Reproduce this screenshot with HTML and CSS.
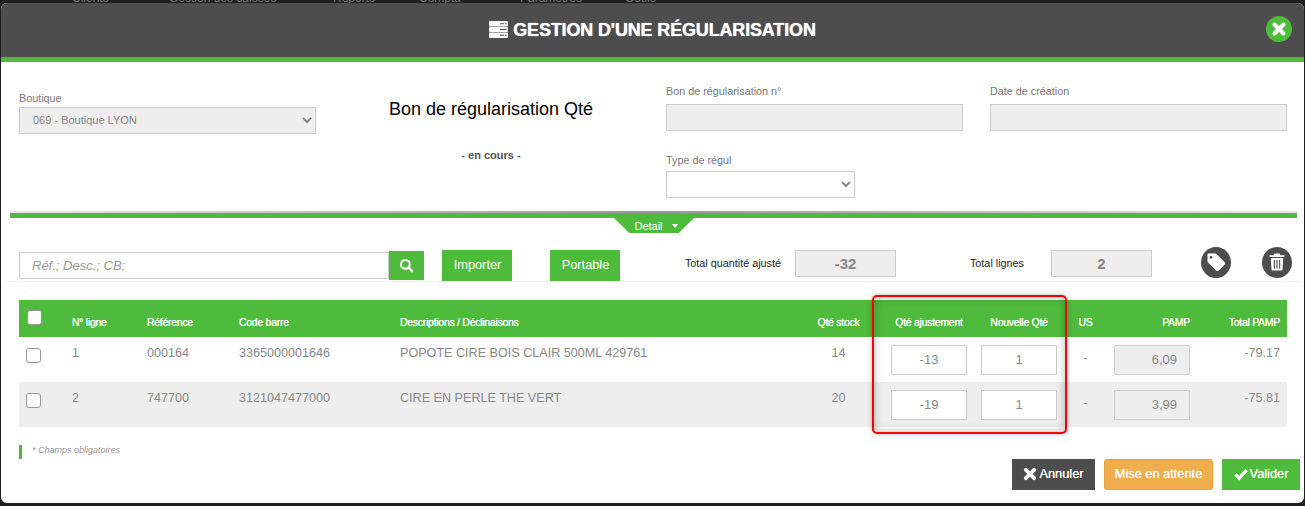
FILE: index.html
```html
<!DOCTYPE html>
<html lang="fr">
<head>
<meta charset="utf-8">
<title>Gestion d'une régularisation</title>
<link rel="stylesheet" href="styles.css">
</head>
<body>
<nav class="topnav">
  <div class="topnav-inner">
    <span>Clients</span><span>Gestion des caisses</span><span>Reports</span><span>Compta</span><span>Paramètres</span><span>Outils</span>
  </div>
</nav>
<main class="modal">
  <header class="modal-head">
    <svg class="head-icon" viewBox="0 0 19 17" aria-hidden="true">
      <path fill="#fff" fill-rule="evenodd" d="M1 0h17a1 1 0 0 1 1 1v3.500a1 1 0 0 1-1 1H1a1 1 0 0 1-1-1V1a1 1 0 0 1 1-1zM11 2.200v1h4v-1zM16 2.200v1h1.500v-1zM1 6h17a1 1 0 0 1 1 1v3a1 1 0 0 1-1 1H1a1 1 0 0 1-1-1V7a1 1 0 0 1 1-1zM11 8v1h6.500V8zM1 11.500h17a1 1 0 0 1 1 1V16a1 1 0 0 1-1 1H1a1 1 0 0 1-1-1v-3.500a1 1 0 0 1 1-1zM11 13.800v1h4v-1zM16 13.800v1h1.500v-1z"/>
    </svg>
    <h1 class="modal-title">GESTION D'UNE RÉGULARISATION</h1>
    <button class="close" type="button" aria-label="Fermer">
      <svg viewBox="0 0 26 26" aria-hidden="true"><path d="M8.500 8.500l9 9M17.500 8.500l-9 9" stroke="#fff" stroke-width="4" stroke-linecap="round"/></svg>
    </button>
  </header>

  <section class="form-top">
    <div class="col-shop">
      <label class="field-label">Boutique</label>
      <select class="field select-shop" disabled><option>069 - Boutique LYON</option></select>
    </div>
    <div class="col-title">
      <h2 class="doc-title">Bon de régularisation Qté</h2>
      <p class="doc-status">- en cours -</p>
    </div>
    <div class="col-bon">
      <label class="field-label label-tight">Bon de régularisation n°</label>
      <input class="field field-off" type="text" disabled>
      <label class="field-label label-type">Type de régul</label>
      <select class="field select-type"><option></option></select>
    </div>
    <div class="col-date">
      <label class="field-label label-tight">Date de création</label>
      <input class="field field-off" type="text" disabled>
    </div>
  </section>

  <div class="divider">
    <div class="divider-tab"><span>Detail</span><i class="caret"></i></div>
  </div>

  <section class="toolbar">
    <input class="search" type="text" placeholder="Réf.; Desc.; CB;">
    <button class="search-btn" type="button" aria-label="Rechercher">
      <svg viewBox="0 0 16 16" aria-hidden="true"><circle cx="6.800" cy="6.800" r="4.600" fill="none" stroke="#fff" stroke-width="2.200"/><path d="M10.300 10.300l3.700 3.700" stroke="#fff" stroke-width="2.600" stroke-linecap="round"/></svg>
    </button>
    <button class="btn-green btn-import" type="button">Importer</button>
    <button class="btn-green btn-portable" type="button">Portable</button>
    <span class="total-label label-qty">Total quantité ajusté</span>
    <output class="total-box">-32</output>
    <span class="total-label label-lines">Total lignes</span>
    <output class="total-box">2</output>
    <button class="round round-tag" type="button" aria-label="Étiquette">
      <svg viewBox="0 0 30 31" aria-hidden="true"><path fill="#fff" fill-rule="evenodd" d="M7.500 6.500h6.500c.7 0 1.300.3 1.800.8l7.700 7.700c.8.8.8 2 0 2.800l-5.700 5.700c-.8.800-2 .8-2.800 0l-7.700-7.700c-.5-.5-.8-1.100-.8-1.800V7.500a1 1 0 0 1 1-1zM10 8.900a1.400 1.400 0 1 0 0 2.800 1.400 1.400 0 0 0 0-2.800z"/></svg>
    </button>
    <button class="round round-trash" type="button" aria-label="Supprimer">
      <svg viewBox="0 0 30 31" aria-hidden="true"><path fill="#fff" fill-rule="evenodd" d="M12.500 6.500h5l1 1.700H22.500v1.800H7.500V8.200h4zM8.800 11h12.400l-.7 11.500c0 .6-.5 1.100-1.100 1.100h-8.800c-.6 0-1.100-.5-1.100-1.100zM11.800 13v8.500h1.100V13zM14.450 13v8.500h1.100V13zM17.100 13v8.500h1.100V13z"/></svg>
    </button>
  </section>

  <section class="table-wrap">
    <table class="lines">
      <colgroup>
        <col class="c-check"><col class="c-num"><col class="c-ref"><col class="c-code"><col class="c-desc"><col class="c-stock"><col class="c-qty"><col class="c-qty"><col class="c-us"><col class="c-qty"><col class="c-qty">
      </colgroup>
      <thead>
        <tr>
          <th class="th-check"><input class="check" type="checkbox"></th>
          <th>N° ligne</th>
          <th>Référence</th>
          <th>Code barre</th>
          <th>Descriptions / Déclinaisons</th>
          <th class="center">Qté stock</th>
          <th class="center">Qté ajustement</th>
          <th class="center">Nouvelle Qté</th>
          <th class="center">US</th>
          <th class="right">PAMP</th>
          <th class="right">Total PAMP</th>
        </tr>
      </thead>
      <tbody>
        <tr>
          <td class="td-check"><input class="check" type="checkbox"></td>
          <td>1</td>
          <td>000164</td>
          <td>3365000001646</td>
          <td>POPOTE CIRE BOIS CLAIR 500ML 429761</td>
          <td class="center">14</td>
          <td class="td-input"><input class="qty" type="text" value="-13"></td>
          <td class="td-input"><input class="qty" type="text" value="1"></td>
          <td class="center td-dash">-</td>
          <td class="td-input"><input class="qty qty-off" type="text" value="6,09" disabled></td>
          <td class="right">-79.17</td>
        </tr>
        <tr class="alt">
          <td class="td-check"><input class="check" type="checkbox"></td>
          <td>2</td>
          <td>747700</td>
          <td>3121047477000</td>
          <td>CIRE EN PERLE THE VERT</td>
          <td class="center">20</td>
          <td class="td-input"><input class="qty" type="text" value="-19"></td>
          <td class="td-input"><input class="qty" type="text" value="1"></td>
          <td class="center td-dash">-</td>
          <td class="td-input"><input class="qty qty-off" type="text" value="3,99" disabled></td>
          <td class="right">-75.81</td>
        </tr>
      </tbody>
    </table>
    <div class="highlight"></div>
  </section>

  <footer class="modal-foot">
    <p class="note">* Champs obligatoires</p>
    <div class="actions">
      <button class="act act-cancel" type="button">
        <svg viewBox="0 0 14 14" aria-hidden="true"><path d="M2.800 2.800l8.400 8.400M11.200 2.800l-8.400 8.400" stroke="#fff" stroke-width="3.800" stroke-linecap="round"/></svg>Annuler
      </button>
      <button class="act act-wait" type="button">Mise en attente</button>
      <button class="act act-ok" type="button">
        <svg viewBox="0 0 14 14" aria-hidden="true"><path d="M1.500 7.500l3.800 3.700 7.400-8" fill="none" stroke="#fff" stroke-width="3.200"/></svg>Valider
      </button>
    </div>
  </footer>
</main>
</body>
</html>
```

FILE: styles.css
```css
* { box-sizing: border-box; }
html, body { margin: 0; height: 506px; overflow: hidden; }
body {
  background: #1f1f1f;
  font-family: "Liberation Sans", Arial, sans-serif;
  color: #888;
}
.topnav { height: 3px; overflow: hidden; }
.topnav-inner {
  display: grid;
  grid-template-columns: 97px 164px 86px 101px 105px auto;
  justify-content: start;
  margin-top: -9px;
  padding-left: 72px;
  font-size: 12px;
  line-height: 14px;
  color: #777;
}
.modal {
  margin: 0 1px;
  height: 500px;
  background: #fff;
  border-radius: 6px;
  overflow: hidden;
  display: flex;
  flex-direction: column;
}
.modal-head {
  position: relative;
  flex: none;
  height: 59px;
  background: #4d4d4d;
  border-bottom: 5px solid #4fbb3c;
  display: flex;
  align-items: center;
  justify-content: center;
  gap: 5px;
}
.head-icon { width: 19px; height: 17px; margin-top: -1px; }
.modal-title {
  margin: 0 0 1px;
  font-size: 18px;
  line-height: 22px;
  font-weight: 700;
  letter-spacing: -0.160px;
  color: #fff;
  text-shadow: 0 0 1px #fff;
}
.close {
  position: absolute;
  left: 1265px;
  top: 13px;
  width: 26px;
  height: 26px;
  padding: 0;
  border: 0;
  border-radius: 50%;
  background: #4fbb3c;
}
.close svg { display: block; width: 26px; height: 26px; }

.form-top {
  flex: none;
  height: 149px;
  display: flex;
  padding-left: 18px;
}
.col-shop, .col-bon, .col-date {
  width: 297px;
  display: flex;
  flex-direction: column;
}
.col-shop { padding-top: 30px; }
.col-bon, .col-date { padding-top: 23px; }
.col-date { margin-left: 27px; }
.col-title { width: 350px; text-align: center; padding-top: 37px; color: #000; }
.field-label { font-size: 10.800px; line-height: 13px; color: #777; margin-bottom: 2px; }
.label-tight { margin-bottom: 6px; }
.label-type { margin-top: 23px; margin-bottom: 4px; }
.field {
  height: 27px;
  border: 1px solid #ccc;
  border-radius: 0;
  font-family: inherit;
  font-size: 11px;
  color: #888;
  background: #fff;
  padding: 0 10px;
}
.select-shop { padding: 0 9px 2px; }
.field-off, .select-shop { background: #eee; opacity: 1; }
.select-shop { width: 297px; }
.select-type { width: 189px; }
.doc-title { margin: 0; font-size: 18px; line-height: 21px; font-weight: 400; }
.doc-status { margin: 28px 0 0; font-size: 11px; line-height: 14px; font-weight: 700; color: #555; }

.divider {
  flex: none;
  margin: 0 7px 0 9px;
  padding-top: 2px;
  background: linear-gradient(90deg, #e8e8e8, #999 50%, #e8e8e8) top / 100% 2px no-repeat;
}
.divider::before {
  content: "";
  display: block;
  height: 5px;
  background: #4fbb3c;
}
.divider-tab {
  width: 80px;
  height: 15px;
  margin: 0 auto;
  position: relative;
  left: 0.500px;
  display: flex;
  align-items: center;
  justify-content: center;
  gap: 9px;
  padding-left: 4px;
  background: #4fbb3c;
  clip-path: polygon(0 0, 100% 0, 81% 100%, 19% 100%);
  color: #fff;
  font-size: 11px;
}
.caret {
  width: 0;
  height: 0;
  border: 3px solid transparent;
  border-top: 4px solid #fff;
  border-bottom: 0;
}

.toolbar {
  flex: none;
  height: 49px;
  margin: 0 4px 0 5px;
  padding: 14px 0 0 13px;
  border-bottom: 1px solid #eee;
  display: flex;
  align-items: flex-start;
}
.search {
  width: 370px;
  height: 27px;
  margin-top: 5px;
  border: 1px solid #ccc;
  padding: 0 12px;
  font-family: inherit;
  font-size: 13px;
  font-style: italic;
  color: #888;
  outline: 0;
}
.search::placeholder { color: #999; }
.search-btn {
  width: 35px;
  height: 29px;
  margin-top: 4px;
  padding: 0;
  border: 0;
  background: #4fbb3c;
  display: flex;
  align-items: center;
  justify-content: center;
}
.search-btn svg { width: 15px; height: 15px; }
.btn-green {
  width: 70px;
  height: 31px;
  margin-top: 3px;
  padding: 0 0 2px 1px;
  border: 0;
  background: #4fbb3c;
  color: #fff;
  font-family: inherit;
  font-size: 12.800px;
}
.btn-import { margin-left: 18px; }
.btn-portable { margin-left: 38px; }
.total-label { font-size: 10.800px; line-height: 27px; color: #222; margin-top: 3px; white-space: nowrap; }
.label-qty { width: 161px; text-align: right; margin-right: 14px; }
.label-lines { width: 128px; text-align: right; margin-right: 27px; }
.total-box {
  width: 101px;
  height: 27px;
  margin-top: 3px;
  border: 1px solid #ccc;
  background: #eee;
  color: #888;
  font-size: 15px;
  font-weight: 700;
  line-height: 25px;
  text-align: center;
}
.round {
  width: 30px;
  height: 31px;
  padding: 0;
  border: 0;
  border-radius: 50%;
  background: #4d4d4d;
}
.round svg { display: block; width: 30px; height: 31px; }
.round-tag { margin-left: 49px; }
.round-trash { margin-left: 31px; }

.table-wrap { flex: none; position: relative; margin: 18px 0 0 18px; width: 1268px; }
.lines {
  width: 1268px;
  table-layout: fixed;
  border-collapse: collapse;
}
.c-check { width: 46px; }
.c-num { width: 75px; }
.c-ref { width: 92px; }
.c-code { width: 161px; }
.c-desc { width: 400px; }
.c-stock { width: 91px; }
.c-qty { width: 90px; }
.c-us { width: 43px; }
.lines th {
  height: 37px;
  padding: 15px 7px 0;
  background: #4fbb3c;
  color: #fff;
  font-size: 10.500px;
  line-height: 14px;
  font-weight: 400;
  text-align: left;
  text-shadow: 0 0 .5px #fff;
  letter-spacing: -0.280px;
  white-space: nowrap;
  vertical-align: top;
}
.lines th.th-check { padding: 10px 0 0 8px; }
.lines td {
  height: 45px;
  padding: 9px 7px 0;
  font-size: 12.600px;
  line-height: 15px;
  color: #888;
  vertical-align: top;
  white-space: nowrap;
}
.lines td.td-check { padding: 11px 0 0 7px; }
.lines td.td-input { padding: 8px 7px 0; }
.lines td.td-dash { padding-top: 14px; }
.lines .center { text-align: center; }
.lines .right { text-align: right; }
.alt td { background: #eee; }
.check {
  appearance: none;
  display: block;
  width: 15px;
  height: 15px;
  margin: 0;
  background: #fff;
  border: 1px solid #999;
  border-radius: 3px;
}
.qty {
  display: block;
  width: 76px;
  height: 30px;
  border: 1px solid #ccc;
  padding: 0 12px 2px;
  background: #fff;
  color: #888;
  font-family: inherit;
  font-size: 13px;
  text-align: center;
}
.qty-off { background: #eee; text-align: right; opacity: 1; }
.highlight {
  position: absolute;
  left: 853px;
  top: -5px;
  width: 195px;
  height: 139px;
  border: 2px solid #f00;
  border-radius: 5px;
  box-shadow: 0 0 5px rgba(0, 0, 0, .3), inset 0 0 10px rgba(0, 0, 0, .28);
  pointer-events: none;
}

.modal-foot {
  flex: 1;
  display: flex;
  justify-content: space-between;
  padding: 18px 4px 0 18px;
}
.note {
  margin: 0;
  height: 14px;
  border-left: 3px solid #4fbb3c;
  padding-left: 10px;
  font-size: 9px;
  line-height: 11px;
  font-style: italic;
  color: #999;
}
.actions { display: flex; gap: 9px; margin-top: 14px; height: 31px; }
.act {
  height: 31px;
  padding: 0 0 2px;
  border: 0;
  color: #fff;
  font-family: inherit;
  font-size: 12.800px;
  display: flex;
  align-items: center;
  justify-content: center;
  gap: 2px;
  text-shadow: 0 0 .5px #fff;
}
.act svg { width: 14px; height: 14px; }
.act-cancel { width: 83px; background: #4d4d4d; }
.act-wait { width: 109px; background: #f0ad4e; border: 1px solid #eea236; border-radius: 3px; }
.act-ok { width: 78px; background: #4fbb3c; }
```
